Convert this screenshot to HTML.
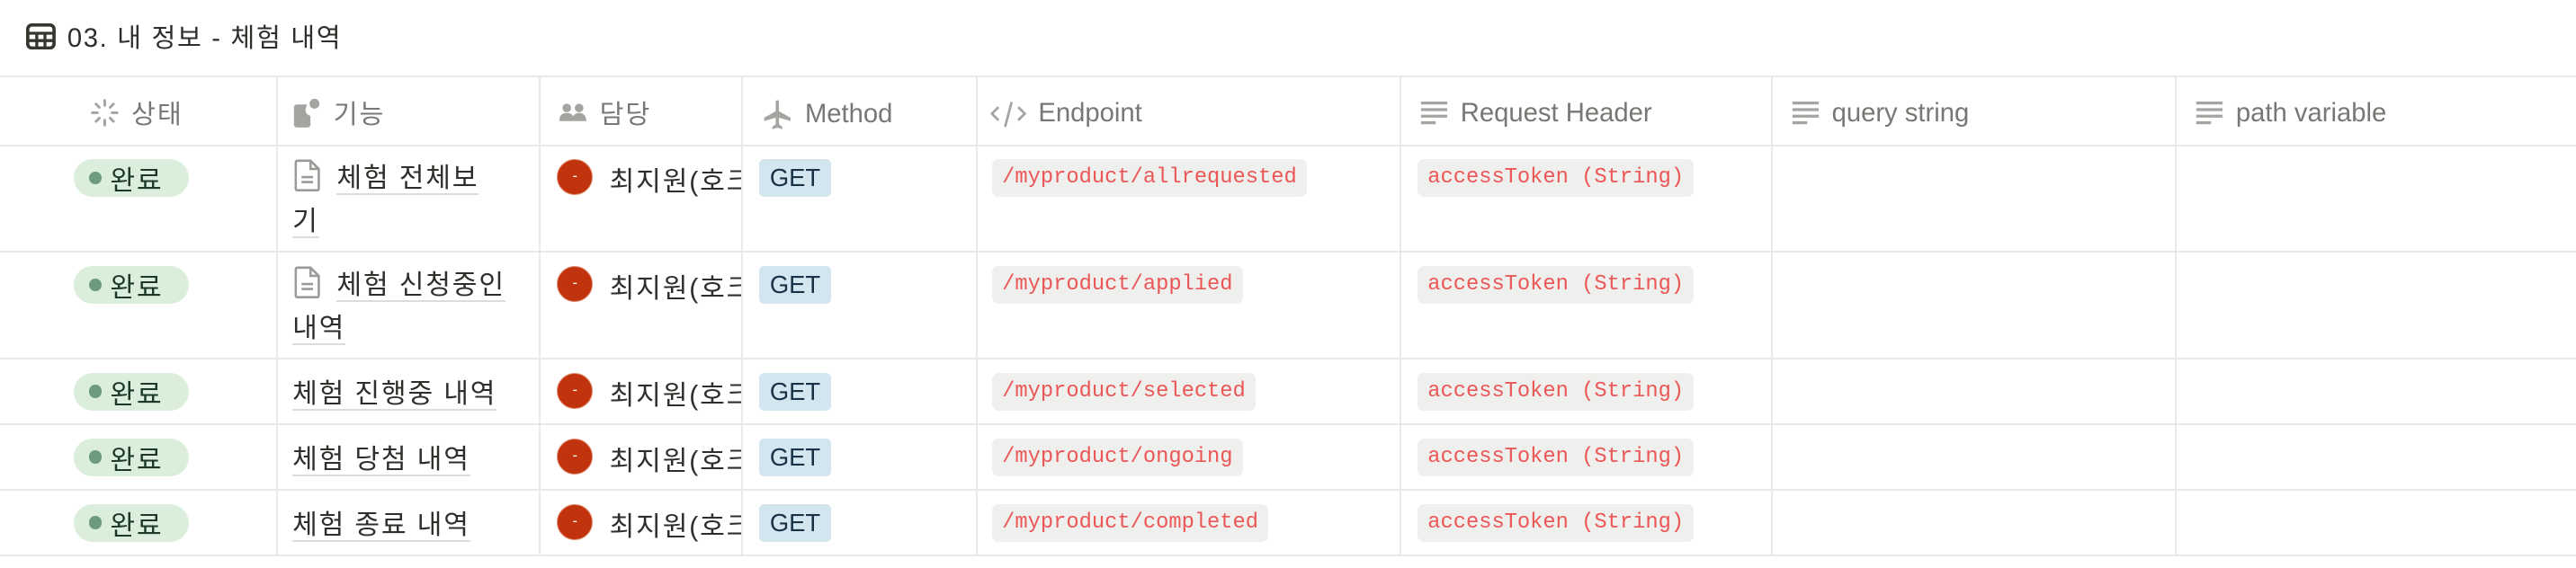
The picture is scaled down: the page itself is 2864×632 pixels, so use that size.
<!DOCTYPE html>
<html><head><meta charset="utf-8"><style>
*{box-sizing:border-box;margin:0;padding:0}
html,body{background:#fff;overflow:hidden}
body{width:1568px;height:346px;zoom:1.82653;position:relative;font-family:"Liberation Sans","Noto Sans CJK KR",sans-serif;color:#37352f}
.ko{font-size:16.5px;letter-spacing:1px}
.title{position:absolute;left:16px;top:11px;font-size:16px;display:flex;align-items:center;gap:7px;height:22px;color:#2f2e2a}
.title span{letter-spacing:.9px}
.row{position:absolute;left:0;width:1568px;border-top:1.5px solid #e9e9e7}
.vl{position:absolute;top:46px;height:292px;width:1px;background:#e9e9e7}
.cell{position:absolute;font-size:16px;white-space:nowrap}
.hd{color:#787774;display:flex;align-items:center;gap:7px}
.badge{position:absolute;left:40px;height:23px;width:70px;border-radius:12px;background:#dbeddb;color:#1c3829;display:flex;align-items:center;padding-left:9px;gap:5px}
.badge i{width:8px;height:8px;border-radius:50%;background:#6c9b7d;display:block}
.av{position:absolute;left:334px;width:22px;height:22px;border-radius:50%;background:#c1330c;border:1px solid #e08a70;color:#fff;font-size:9px;text-align:center;line-height:20px}
.who{position:absolute;left:366px;width:80px;overflow:hidden;white-space:nowrap;color:#2f2e2a}
.get{position:absolute;left:457px;width:44px;height:23px;background:#d3e5ef;color:#183347;border-radius:3px;font-size:15px;text-align:center;line-height:23px}
.code{position:absolute;height:23px;background:#efefed;color:#eb5757;border-radius:4px;font-family:"Liberation Mono",monospace;font-size:13px;line-height:23px;padding:0 6px}
.fn{position:absolute;line-height:26px;color:#2f2e2a}
.fn u{text-decoration:none;border-bottom:1.5px solid #dcdcda}
</style></head><body>
<div class="title">
<svg width="18" height="16" viewBox="0 0 18 16"><rect x="1" y="1" width="16" height="14" rx="2.5" fill="none" stroke="#37352f" stroke-width="2"/><path d="M1 6h16M1 10.5h16M6.5 6v9M11.5 6v9" stroke="#37352f" stroke-width="1.8"/></svg>
<span>03. 내 정보 - 체험 내역</span></div>

<div class="row" style="top:46px"></div>
<div class="row" style="top:88px"></div>
<div class="row" style="top:153px"></div>
<div class="row" style="top:218px"></div>
<div class="row" style="top:258px"></div>
<div class="row" style="top:298px"></div>
<div class="row" style="top:338px"></div>
<div class="vl" style="left:168px"></div><div class="vl" style="left:328px"></div><div class="vl" style="left:451px"></div><div class="vl" style="left:594px"></div><div class="vl" style="left:852px"></div><div class="vl" style="left:1078px"></div><div class="vl" style="left:1324px"></div>

<div class="cell hd ko" style="left:55px;top:57px"><svg width="18" height="18" viewBox="0 0 18 18" stroke="#a5a4a0" stroke-width="1.6" stroke-linecap="round"><path d="M9 1.5v3M9 13.5v3M1.5 9h3M13.5 9h3M3.7 3.7l2 2M12.3 12.3l2 2M3.7 14.3l2-2M12.3 5.7l2-2"/></svg>상태</div>
<div class="cell hd ko" style="left:178px;top:57px"><svg width="18" height="18" viewBox="0 0 18 18"><path d="M1 6q0-2 2-2h6l-1 3q0 3 3 4v5q0 2-2 2H3q-2 0-2-2z" fill="#a5a4a0"/><circle cx="13.5" cy="3.5" r="3" fill="#a5a4a0"/></svg>기능</div>
<div class="cell hd ko" style="left:340px;top:57px"><svg width="18" height="16" viewBox="0 0 18 16" fill="#a5a4a0"><circle cx="5" cy="5" r="2.6"/><circle cx="12.5" cy="5" r="2.6"/><path d="M0.5 13q0-5 4.5-5t4.5 5zM8.5 13q0-5 4-5t4.5 5z"/></svg>담당</div>
<div class="cell hd" style="left:463px;top:60px"><svg width="20" height="20" viewBox="0 0 20 20" fill="#a5a4a0"><path d="M9 1.5q1-1.5 2 0v6l7 4v2l-7-2v4l2 1.5v1.5l-3-1-3 1v-1.5l2-1.5v-4l-7 2v-2l7-4z"/></svg>Method</div>
<div class="cell hd" style="left:603px;top:60px"><svg width="22" height="18" viewBox="0 0 22 18" fill="none" stroke="#a5a4a0" stroke-width="1.5"><path d="M5 5l-4 4 4 4M17 5l4 4-4 4M13 2l-4 15"/></svg>Endpoint</div>
<div class="cell hd" style="left:864px;top:60px"><svg width="18" height="16" viewBox="0 0 18 16" stroke="#a5a4a0" stroke-width="1.8"><path d="M1 2h16M1 6h16M1 10h16M1 14h9"/></svg>Request Header</div>
<div class="cell hd" style="left:1090px;top:60px"><svg width="18" height="16" viewBox="0 0 18 16" stroke="#a5a4a0" stroke-width="1.8"><path d="M1 2h16M1 6h16M1 10h16M1 14h9"/></svg>query string</div>
<div class="cell hd" style="left:1336px;top:60px"><svg width="18" height="16" viewBox="0 0 18 16" stroke="#a5a4a0" stroke-width="1.8"><path d="M1 2h16M1 6h16M1 10h16M1 14h9"/></svg>path variable</div>

<div class="badge ko" style="left:45px;top:97px"><i></i>완료</div>
<div class="badge ko" style="left:45px;top:162px"><i></i>완료</div>
<div class="badge ko" style="left:45px;top:227px"><i></i>완료</div>
<div class="badge ko" style="left:45px;top:267px"><i></i>완료</div>
<div class="badge ko" style="left:45px;top:307px"><i></i>완료</div>

<svg style="position:absolute;left:179px;top:97px" width="16" height="20" viewBox="0 0 16 20" fill="none" stroke="#9b9a97" stroke-width="1.4"><path d="M2 1h8l5 5v12q0 1-1 1H2q-1 0-1-1V2q0-1 1-1zM10 1v5h5M4.5 11h7M4.5 14h7"/></svg>
<div class="fn ko" style="left:178px;top:96px"><span style="padding-left:27px"></span><u>체험 전체보</u><br><u>기</u></div>
<svg style="position:absolute;left:179px;top:162px" width="16" height="20" viewBox="0 0 16 20" fill="none" stroke="#9b9a97" stroke-width="1.4"><path d="M2 1h8l5 5v12q0 1-1 1H2q-1 0-1-1V2q0-1 1-1zM10 1v5h5M4.5 11h7M4.5 14h7"/></svg>
<div class="fn ko" style="left:178px;top:161px"><span style="padding-left:27px"></span><u>체험 신청중인</u><br><u>내역</u></div>
<div class="fn ko" style="left:178px;top:227px"><u>체험 진행중 내역</u></div>
<div class="fn ko" style="left:178px;top:267px"><u>체험 당첨 내역</u></div>
<div class="fn ko" style="left:178px;top:307px"><u>체험 종료 내역</u></div>

<div class="av" style="top:97px;left:339px">-</div><div class="who ko" style="top:97px;left:371px">최지원(호크</div>
<div class="av" style="top:162px;left:339px">-</div><div class="who ko" style="top:162px;left:371px">최지원(호크</div>
<div class="av" style="top:227px;left:339px">-</div><div class="who ko" style="top:227px;left:371px">최지원(호크</div>
<div class="av" style="top:267px;left:339px">-</div><div class="who ko" style="top:267px;left:371px">최지원(호크</div>
<div class="av" style="top:307px;left:339px">-</div><div class="who ko" style="top:307px;left:371px">최지원(호크</div>

<div class="get" style="top:97px;left:462px">GET</div>
<div class="get" style="top:162px;left:462px">GET</div>
<div class="get" style="top:227px;left:462px">GET</div>
<div class="get" style="top:267px;left:462px">GET</div>
<div class="get" style="top:307px;left:462px">GET</div>

<div class="code" style="top:97px;left:604px">/myproduct/allrequested</div>
<div class="code" style="top:162px;left:604px">/myproduct/applied</div>
<div class="code" style="top:227px;left:604px">/myproduct/selected</div>
<div class="code" style="top:267px;left:604px">/myproduct/ongoing</div>
<div class="code" style="top:307px;left:604px">/myproduct/completed</div>

<div class="code" style="top:97px;left:863px">accessToken (String)</div>
<div class="code" style="top:162px;left:863px">accessToken (String)</div>
<div class="code" style="top:227px;left:863px">accessToken (String)</div>
<div class="code" style="top:267px;left:863px">accessToken (String)</div>
<div class="code" style="top:307px;left:863px">accessToken (String)</div>
</body></html>
